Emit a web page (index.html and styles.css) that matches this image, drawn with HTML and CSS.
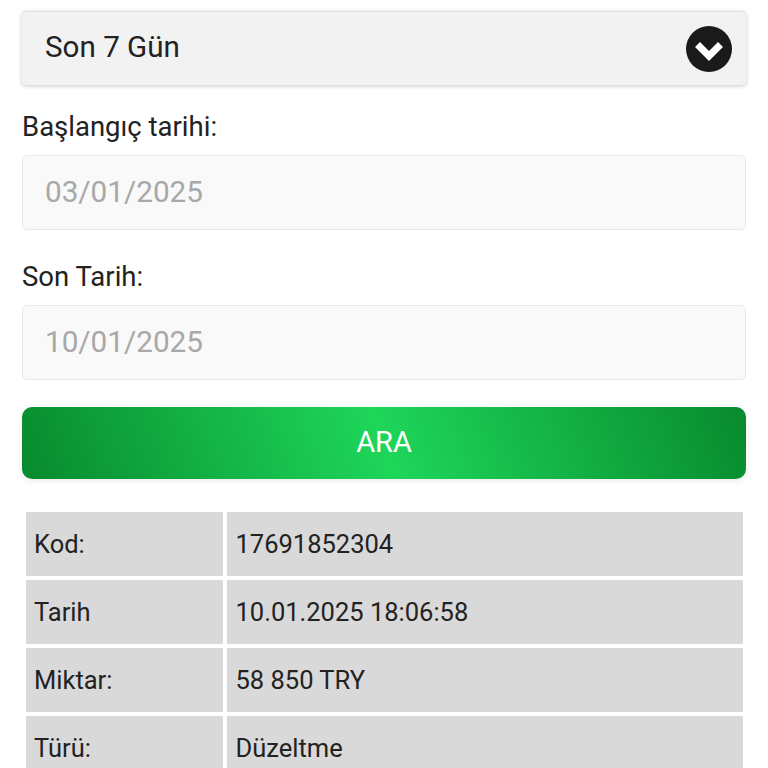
FILE: index.html
```html
<!DOCTYPE html>
<html lang="tr">
<head>
  <meta charset="UTF-8" />
  <meta name="viewport" content="width=device-width, initial-scale=1.0"/>
  <title>Hesap Geçmişi</title>
  <link rel="stylesheet" href="styles.css">
</head>
<body>
  <div class="container">
    <div class="select">
      <span>Son 7 Gün</span>
      <svg class="arrow" viewBox="0 0 46 46" width="46" height="46">
        <circle cx="23" cy="23" r="23" fill="#1a1a1a"/>
        <path d="M11.5 18.5 L23 30 L34.5 18.5" fill="none" stroke="#fff" stroke-width="7"/>
      </svg>
    </div>

    <label class="first">Başlangıç tarihi:</label>
    <div class="field">03/01/2025</div>

    <label>Son Tarih:</label>
    <div class="field">10/01/2025</div>

    <button>ARA</button>

    <table>
      <tr><td class="key">Kod:</td><td>17691852304</td></tr>
      <tr><td class="key">Tarih</td><td>10.01.2025 18:06:58</td></tr>
      <tr><td class="key">Miktar:</td><td>58 850 TRY</td></tr>
      <tr><td class="key">Türü:</td><td>Düzeltme</td></tr>
    </table>
  </div>
</body>
</html>
```

FILE: styles.css
```css
html, body {
  height: 768px;
  overflow: hidden;
}
body {
  font-family: Roboto, 'Noto Sans', sans-serif;
  background: #fff;
  color: #222;
  margin: 0;
}
.container {
  padding: 11px 22px 0 22px;
}
.select {
  display: flex;
  align-items: center;
  justify-content: space-between;
  box-sizing: border-box;
  height: 74px;
  padding: 0 14px 0 23px;
  font-size: 29.6px;
  background: #f2f2f2;
  border-top: 1px solid #e4e4e4;
  border-radius: 4px;
  box-shadow: 0 1px 4px rgba(0,0,0,0.22);
}
.select span {
  margin-bottom: 4px;
}
label {
  display: block;
  height: 30px;
  line-height: 30px;
  margin: 32px 0 13px;
  font-size: 27.5px;
}
label.first {
  margin-top: 27px;
}
.field {
  box-sizing: border-box;
  height: 75px;
  line-height: 72px;
  padding-left: 22px;
  font-size: 29.7px;
  color: #a8a8a8;
  background: #f9f9f9;
  border: 1px solid #e8e8e8;
  border-radius: 5px;
}
button {
  display: block;
  width: 100%;
  height: 72px;
  margin-top: 27px;
  padding: 0 0 2px;
  border: none;
  border-radius: 10px;
  font-family: inherit;
  font-size: 29px;
  color: #fff;
  background: linear-gradient(70deg, #088a2e 0%, #1ed65a 50%, #088a2e 100%);
  box-shadow: 0 2px 6px rgba(0,0,0,0.08);
}
table {
  width: 725px;
  margin-top: 29px;
  border-collapse: separate;
  border-spacing: 4.5px 4px;
  table-layout: fixed;
  font-size: 25.5px;
}
td {
  height: 64px;
  padding: 0 0 0 8.5px;
  background: #d9d9d9;
  color: #222;
}
td.key {
  width: 189px;
  padding-left: 8px;
}
```
